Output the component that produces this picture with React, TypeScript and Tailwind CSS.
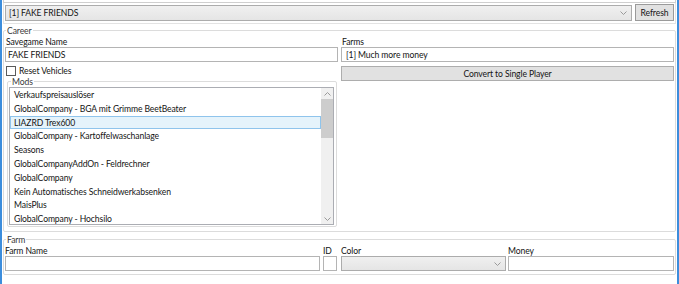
import React from "react";

const mods = [
  "Verkaufspreisauslöser",
  "GlobalCompany - BGA mit Grimme BeetBeater",
  "LIAZRD Trex600",
  "GlobalCompany - Kartoffelwaschanlage",
  "Seasons",
  "GlobalCompanyAddOn - Feldrechner",
  "GlobalCompany",
  "Kein Automatisches Schneidwerkabsenken",
  "MaisPlus",
  "GlobalCompany - Hochsilo",
];

function Chevron({ up = false }: { up?: boolean }) {
  return (
    <svg width="7" height="4" viewBox="0 0 7 4" className="shrink-0">
      <path
        d={up ? "M0.5 3.5 L3.5 0.5 L6.5 3.5" : "M0.5 0.5 L3.5 3.5 L6.5 0.5"}
        fill="none"
        stroke="#9a9a9a"
        strokeWidth="1"
      />
    </svg>
  );
}

function Label({ children, className = "" }: { children?: React.ReactNode; className?: string }) {
  return <div className={`h-[11px] leading-[13px] whitespace-nowrap ${className}`}>{children}</div>;
}

function TextBox({ value = "", className = "" }: { value?: string; className?: string }) {
  return (
    <div
      className={`h-[15px] border border-[#b4b4b4] bg-white leading-[14px] whitespace-nowrap overflow-hidden ${className}`}
    >
      {value}
    </div>
  );
}

function ComboBox({ value = "", className = "" }: { value?: string; className?: string }) {
  return (
    <div
      className={`flex items-center border border-[#acacac] bg-gradient-to-b from-[#f0f0f0] to-[#e5e5e5] ${className}`}
    >
      <span className="flex-1 pl-[3px] leading-[14px] whitespace-nowrap">{value}</span>
      <span className="pr-[4px] flex items-center">
        <Chevron />
      </span>
    </div>
  );
}

function Legend({ children, className = "ml-[2px]" }: { children: React.ReactNode; className?: string }) {
  return (
    <legend className={`px-[1px] leading-[13px] h-[11px] text-[#3a3a3a] ${className}`}>
      {children}
    </legend>
  );
}

export default function App() {
  return (
    <div className="w-[679px] h-[284px] overflow-hidden bg-white border-x-2 border-[#3c8ddc] px-[1px] text-[8.6px] tracking-[-0.1px] leading-[11px] text-[#141414] font-['Lato',sans-serif]">
      {/* top strip */}
      <div className="h-[3px] border-x border-b border-[#cfcfcf]" />

      {/* savegame selector */}
      <div className="h-[21px] flex items-start gap-[3px] px-[1px] border-x border-b border-[#e3e3e3]">
        <ComboBox value="[1] FAKE FRIENDS" className="flex-1 h-[16px] mt-[2px]" />
        <button
          type="button"
          className="w-[39px] h-[17px] mt-[1px] border border-[#9a9a9a] bg-[#e1e1e1] leading-[14px] text-[#141414]"
        >
          Refresh
        </button>
      </div>

      {/* Career */}
      <fieldset className="mt-[1px] h-[207px] border border-[#dcdcdc] rounded-[2px]">
        <Legend>Career</Legend>
        <div className="flex gap-[3px] px-[1px]">
          <div className="w-[333px] flex flex-col">
            <Label className="pl-[1px]">Savegame Name</Label>
            <TextBox value="FAKE FRIENDS" className="pl-[2px]" />
            <label className="mt-[3px] h-[11px] flex items-start gap-[3px] pl-[1px] leading-[13px]">
              <span className="mt-[1px] w-[10px] h-[10px] border border-[#5a5a5a] bg-white" />
              <span>Reset Vehicles</span>
            </label>
            <fieldset className="ml-[2px] w-[330px] h-[151px] border border-[#dcdcdc] rounded-[2px]">
              <Legend className="ml-[3px]">Mods</Legend>
              <div className="ml-[1px] w-[325px] h-[138px] border border-[#abadb3] flex">
                <div className="flex-1 overflow-hidden">
                  {mods.map((m, i) => (
                    <div
                      key={m}
                      className={`h-[13.8px] leading-[13px] pl-[3px] whitespace-nowrap border ${
                        i === 2
                          ? "bg-[#e5f3fb] border-[#8fc4ec]"
                          : "border-transparent"
                      }`}
                    >
                      {m}
                    </div>
                  ))}
                </div>
                <div className="w-[12px] bg-[#f0f0f0] flex flex-col items-center">
                  <div className="h-[11px] flex items-center">
                    <Chevron up />
                  </div>
                  <div className="w-[12px] h-[39px] bg-[#cdcdcd]" />
                  <div className="flex-1" />
                  <div className="h-[11px] flex items-center">
                    <Chevron />
                  </div>
                </div>
              </div>
            </fieldset>
          </div>

          <div className="w-[333px] flex flex-col">
            <Label className="pl-[1px]">Farms</Label>
            <TextBox value="[1] Much more money" className="pl-[4px]" />
            <button
              type="button"
              className="mt-[4px] h-[15px] border border-[#adadad] bg-[#e1e1e1] leading-[14px] text-center text-[#141414]"
            >
              Convert to Single Player
            </button>
          </div>
        </div>
      </fieldset>

      {/* Farm */}
      <fieldset className="mt-[2px] h-[41px] border border-[#dcdcdc] rounded-[2px]">
        <Legend>Farm</Legend>
        <div className="flex px-[1px]">
          <div className="w-[315px] flex flex-col">
            <Label>Farm Name</Label>
            <TextBox />
          </div>
          <div className="ml-[3px] w-[14px] flex flex-col">
            <Label>ID</Label>
            <TextBox />
          </div>
          <div className="ml-[4px] w-[165px] flex flex-col">
            <Label>Color</Label>
            <ComboBox className="h-[15px]" />
          </div>
          <div className="ml-[2px] w-[166px] flex flex-col">
            <Label>Money</Label>
            <TextBox />
          </div>
        </div>
      </fieldset>
    </div>
  );
}
